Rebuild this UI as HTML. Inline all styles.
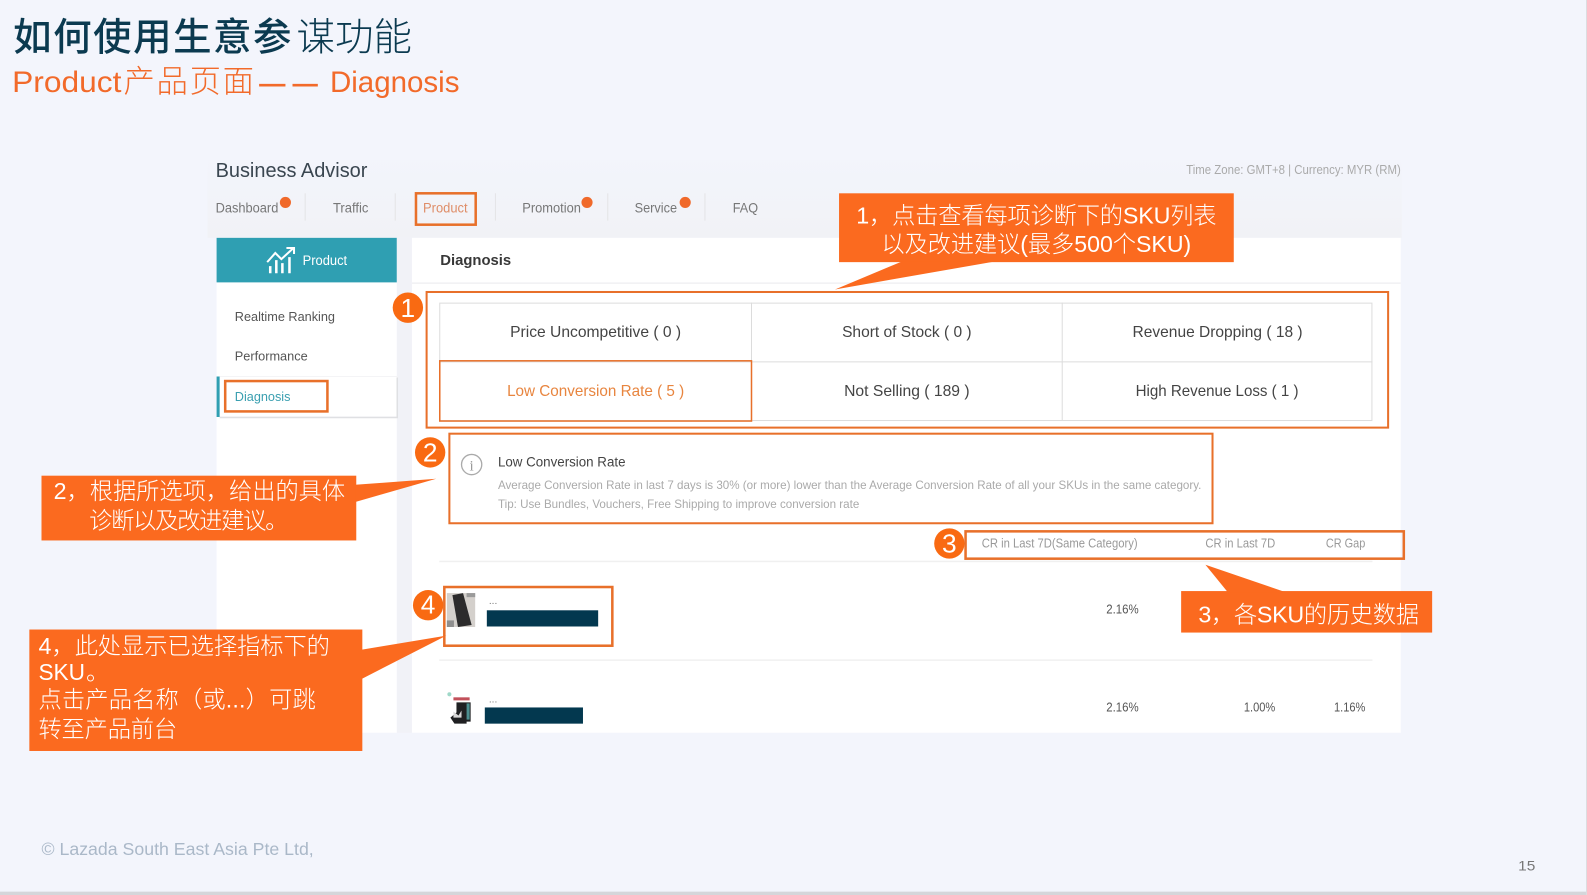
<!DOCTYPE html>
<html lang="zh"><head><meta charset="utf-8"><title>Product Diagnosis</title>
<style>
html,body{margin:0;padding:0;width:1587px;height:895px;overflow:hidden;background:#f3f5fc}
svg{display:block;filter:blur(.3px)}
text{font-family:"Liberation Sans","Noto Sans CJK SC",sans-serif;white-space:pre}
.c{font-family:"Liberation Sans","Noto Sans CJK SC",sans-serif;font-size:23px;fill:#fff;font-weight:300}
.cell{font-size:15.5px;fill:#444}
.tab{font-size:13.5px;fill:#777}
.hd{font-size:12.5px;fill:#999}
.v{font-size:12.5px;fill:#555}
.n{font-size:26px;fill:#fff;text-anchor:middle}
.o{fill:none;stroke:#e8702a}
</style></head><body>
<svg xmlns="http://www.w3.org/2000/svg" width="1587" height="895" viewBox="0 0 1568 884.3" preserveAspectRatio="none">
<defs><linearGradient id="g" x1="0" y1="0" x2="0" y2="1"><stop offset="0" stop-color="#f3f5fc"/><stop offset="1" stop-color="#f1f2f6"/></linearGradient></defs>
<rect width="1568" height="885" fill="#f3f5fc"/>
<rect x="205" y="150" width="1180" height="85" fill="url(#g)"/>
<rect x="392" y="235" width="15" height="489" fill="#f1f2f7"/>
<rect y="881" width="1568" height="4" fill="#d5d6da"/>
<rect x="1567" width="1" height="885" fill="#dcdde0"/>

<text x="13" y="50" font-size="38" font-weight="500" fill="#0b3a50" textLength="275" lengthAdjust="spacing">如何使用生意参</text>
<text x="293" y="50" font-size="38" font-weight="300" fill="#0b3a50" textLength="114" lengthAdjust="spacing">谋功能</text>
<text x="12" y="91" font-size="29" fill="#f26a2a" textLength="108" lengthAdjust="spacingAndGlyphs">Product</text>
<text x="122" y="91" font-size="31" font-weight="300" fill="#f26a2a" textLength="129" lengthAdjust="spacing">产品页面</text>
<text x="256" y="91" font-size="26" font-weight="700" fill="#f26a2a" textLength="26" lengthAdjust="spacingAndGlyphs">—</text>
<text x="289" y="91" font-size="26" font-weight="700" fill="#f26a2a" textLength="25" lengthAdjust="spacingAndGlyphs">—</text>
<text x="326" y="91" font-size="29" fill="#f26a2a" textLength="128" lengthAdjust="spacingAndGlyphs">Diagnosis</text>

<text x="213" y="175" font-size="20" fill="#3a4650" textLength="150" lengthAdjust="spacingAndGlyphs">Business Advisor</text>
<text x="1172" y="172" font-size="12.5" fill="#aaa" textLength="212" lengthAdjust="spacingAndGlyphs">Time Zone: GMT+8 | Currency: MYR (RM)</text>
<text class="tab" x="213" y="210" textLength="62" lengthAdjust="spacingAndGlyphs">Dashboard</text>
<circle cx="282" cy="200" r="5.5" fill="#f0692a"/>
<rect x="301" y="191" width="1" height="27" fill="#e4e4e6"/>
<text class="tab" x="329" y="210" textLength="35" lengthAdjust="spacingAndGlyphs">Traffic</text>
<rect x="390" y="191" width="1" height="27" fill="#e4e4e6"/>
<rect class="o" x="411" y="191" width="59" height="31" stroke-width="2.5"/>
<text class="tab" x="418" y="210" style="fill:#df8d68" textLength="44" lengthAdjust="spacingAndGlyphs">Product</text>
<rect x="489" y="191" width="1" height="27" fill="#e4e4e6"/>
<text class="tab" x="516" y="210" textLength="58" lengthAdjust="spacingAndGlyphs">Promotion</text>
<circle cx="580" cy="200" r="5.5" fill="#f0692a"/>
<rect x="600" y="191" width="1" height="27" fill="#e4e4e6"/>
<text class="tab" x="627" y="210" textLength="42" lengthAdjust="spacingAndGlyphs">Service</text>
<circle cx="677" cy="200" r="5.5" fill="#f0692a"/>
<rect x="696" y="191" width="1" height="27" fill="#e4e4e6"/>
<text class="tab" x="724" y="210" textLength="25" lengthAdjust="spacingAndGlyphs">FAQ</text>

<rect x="214" y="279" width="178" height="445" fill="#fff"/>
<rect x="214" y="235" width="178" height="44" fill="#2f9fb2"/>
<g fill="none" stroke="#fff" stroke-width="2">
<path d="M264 259 L272 250 L278 256 L290 245 M283 245 H290.500 V251"/>
<path d="M267 270 V263 M273 270 V257 M279 270 V260 M286 270 V254" stroke-width="2.500"/>
</g>
<text x="299" y="262" font-size="13.5" fill="#fff" textLength="44" lengthAdjust="spacingAndGlyphs">Product</text>
<text x="232" y="317" font-size="13" fill="#555" textLength="99" lengthAdjust="spacingAndGlyphs">Realtime Ranking</text>
<text x="232" y="356" font-size="13" fill="#555" textLength="72" lengthAdjust="spacingAndGlyphs">Performance</text>
<rect x="216" y="372" width="177" height="40" fill="#fff"/>
<path d="M217 372 H392.500 V412 M217 412 H392.500" fill="none" stroke="#f4f4f6"/>
<path d="M392.500 373 V412.500 H217" fill="none" stroke="#dfe0e3" stroke-width="1.500"/>
<rect x="214" y="372" width="3" height="40" fill="#2f9fb2"/>
<rect class="o" x="222.500" y="376.500" width="101" height="30" stroke-width="2.500"/>
<text x="232" y="396" font-size="13" fill="#3a9fb0" textLength="55" lengthAdjust="spacingAndGlyphs">Diagnosis</text>

<rect x="407" y="235" width="977" height="489" fill="#fff"/>
<text x="435" y="262" font-size="15" font-weight="700" fill="#383838" textLength="70" lengthAdjust="spacingAndGlyphs">Diagnosis</text>
<rect x="407" y="279" width="977" height="1.500" fill="#f1f1f3"/>

<rect x="434.500" y="299.500" width="921" height="116" fill="#fff" stroke="#dcdcdc"/>
<path d="M742.500 299 V416 M1049.500 299 V416 M434 357.500 H1356" stroke="#dcdcdc" fill="none"/>
<rect class="o" x="434.500" y="356.500" width="308" height="59.500" stroke-width="1.500"/>
<rect class="o" x="421.500" y="288.500" width="950" height="134" stroke-width="2"/>
<text class="cell" x="504" y="333" textLength="169" lengthAdjust="spacingAndGlyphs">Price Uncompetitive ( 0 )</text>
<text class="cell" x="832" y="333" textLength="128" lengthAdjust="spacingAndGlyphs">Short of Stock ( 0 )</text>
<text class="cell" x="1119" y="333" textLength="168" lengthAdjust="spacingAndGlyphs">Revenue Dropping ( 18 )</text>
<text class="cell" x="501" y="391.500" style="fill:#e8853f" textLength="175" lengthAdjust="spacingAndGlyphs">Low Conversion Rate ( 5 )</text>
<text class="cell" x="834" y="391.500" textLength="124" lengthAdjust="spacingAndGlyphs">Not Selling ( 189 )</text>
<text class="cell" x="1122" y="391.500" textLength="161" lengthAdjust="spacingAndGlyphs">High Revenue Loss ( 1 )</text>

<rect class="o" x="444" y="428.500" width="754" height="88.500" stroke-width="2"/>
<circle cx="466" cy="459" r="10" fill="none" stroke="#aaa" stroke-width="1.300"/>
<text x="466" y="465" font-size="15" fill="#999" text-anchor="middle" style="font-family:'Liberation Serif',serif">i</text>
<text x="492" y="461" font-size="13.5" fill="#444" textLength="126" lengthAdjust="spacingAndGlyphs">Low Conversion Rate</text>
<text x="492" y="483" font-size="12" fill="#aaa" textLength="695" lengthAdjust="spacingAndGlyphs">Average Conversion Rate in last 7 days is 30% (or more) lower than the Average Conversion Rate of all your SKUs in the same category.</text>
<text x="492" y="502" font-size="12" fill="#aaa" textLength="357" lengthAdjust="spacingAndGlyphs">Tip: Use Bundles, Vouchers, Free Shipping to improve conversion rate</text>

<rect x="434" y="554" width="922" height="1.500" fill="#f0f0f0"/>
<rect class="o" x="954" y="525" width="433" height="27" stroke-width="2.500"/>
<text class="hd" x="970" y="541" textLength="154" lengthAdjust="spacingAndGlyphs">CR in Last 7D(Same Category)</text>
<text class="hd" x="1191" y="541" textLength="69" lengthAdjust="spacingAndGlyphs">CR in Last 7D</text>
<text class="hd" x="1310" y="541" textLength="39" lengthAdjust="spacingAndGlyphs">CR Gap</text>

<rect x="441.500" y="586" width="28" height="33.500" fill="#d4d0cc"/>
<rect x="461" y="586" width="8.500" height="4" fill="#9a9a9a"/>
<rect x="441.500" y="613" width="7" height="6.500" fill="#8f8f8f"/>
<path d="M447 588 L457.500 586 L466 617.500 L452.500 619.500 Z" fill="#2c2b2c"/>
<rect class="o" x="439" y="580" width="166" height="58" stroke-width="2.500"/>
<text x="483" y="597" font-size="10" fill="#777">...</text>
<rect x="481" y="603" width="110" height="16" fill="#03384f"/>
<text class="v" x="1093" y="606" textLength="32" lengthAdjust="spacingAndGlyphs">2.16%</text>
<rect x="434" y="651.500" width="922" height="1.500" fill="#f0f0f0"/>
<circle cx="444" cy="686" r="2" fill="#9fd8c8"/>
<rect x="448" y="689" width="16" height="3" fill="#c2505a"/>
<path d="M451 694 H465 V713 H461 V715 H449 L445 709 L451 704 Z" fill="#1f2022"/>
<rect x="461" y="695" width="3" height="16" fill="#4c8f90"/>
<path d="M448 703 L453 707 L456 702 V709 H448 Z" fill="#d8d8d8"/>
<text x="483" y="694" font-size="10" fill="#777">...</text>
<rect x="479" y="699" width="97" height="16" fill="#03384f"/>
<text class="v" x="1093" y="703" textLength="32" lengthAdjust="spacingAndGlyphs">2.16%</text>
<text class="v" x="1229" y="703" textLength="31" lengthAdjust="spacingAndGlyphs">1.00%</text>
<text class="v" x="1318" y="703" textLength="31" lengthAdjust="spacingAndGlyphs">1.16%</text>

<g fill="#fb6a1f">
<rect x="829" y="191" width="390" height="68"/>
<path d="M825 286 L892 258 L985 258 Z"/>
<rect x="41" y="470" width="311" height="64"/>
<path d="M351 479 L431 473 L351 496 Z"/>
<rect x="1167" y="584" width="248" height="41"/>
<path d="M1191 558 L1213 585 L1270 585 Z"/>
<rect x="29" y="622" width="329" height="120"/>
<path d="M357 642 L441 628 L357 671 Z"/>
</g>
<text class="c" x="846" y="221" textLength="356" lengthAdjust="spacing">1，点击查看每项诊断下的SKU列表</text>
<text class="c" x="871" y="249" textLength="306" lengthAdjust="spacingAndGlyphs">以及改进建议(最多500个SKU)</text>
<text class="c" x="53" y="493" textLength="288" lengthAdjust="spacing">2，根据所选项，给出的具体</text>
<text class="c" x="88" y="522" textLength="197" lengthAdjust="spacing">诊断以及改进建议。</text>
<text class="c" x="1184" y="615" textLength="218" lengthAdjust="spacing">3，各SKU的历史数据</text>
<text class="c" x="38" y="646" textLength="288" lengthAdjust="spacing">4，此处显示已选择指标下的</text>
<text class="c" x="38" y="672" textLength="46" lengthAdjust="spacingAndGlyphs">SKU</text>
<text class="c" x="85" y="672">。</text>
<text class="c" x="38" y="699" textLength="274" lengthAdjust="spacing">点击产品名称（或...）可跳</text>
<text class="c" x="38" y="728" textLength="137" lengthAdjust="spacing">转至产品前台</text>

<g fill="#f96a12">
<circle cx="403" cy="304" r="15"/><circle cx="425" cy="447" r="15"/><circle cx="938" cy="537" r="15"/><circle cx="423" cy="598" r="15"/>
</g>
<text class="n" x="403" y="313">1</text>
<text class="n" x="425" y="456">2</text>
<text class="n" x="938" y="546">3</text>
<text class="n" x="423" y="606">4</text>

<text x="41" y="845" font-size="17.5" fill="#aab8c8" textLength="269" lengthAdjust="spacingAndGlyphs">© Lazada South East Asia Pte Ltd,</text>
<text x="1500" y="860" font-size="14" fill="#777" textLength="17" lengthAdjust="spacingAndGlyphs">15</text>
</svg>
</body></html>
